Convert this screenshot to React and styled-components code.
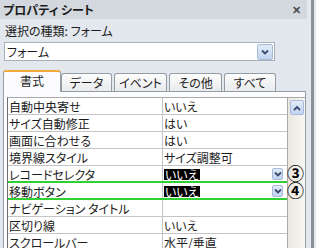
import React from 'react';
import styled, { createGlobalStyle } from 'styled-components';

const Global = createGlobalStyle`
  body {
    margin: 0;
    font-family: "Noto Sans CJK JP", "Noto Sans", sans-serif;
    font-size: 12px;
    font-feature-settings: "palt";
    color: #1c1c1c;
  }
`;

const Window = styled.div`
  width: 316px;
  height: 248px;
  display: flex;
  overflow: hidden;
  background: #e3e7ee;
`;

const Sheet = styled.div`
  width: 311px;
  display: flex;
  flex-direction: column;
`;

const Edge = styled.div`
  width: 3px;
  background: #8c9199;
`;

const TitleBar = styled.div`
  height: 19px;
  margin-right: 4px;
  padding: 0 6px 0 3px;
  display: flex;
  align-items: center;
  justify-content: space-between;
  background: #d3d8df;
  font-weight: bold;
  line-height: 19px;
`;

const Close = styled.span`
  font-size: 11px;
  color: #4a4d52;
`;

const Label = styled.div`
  height: 23px;
  line-height: 23px;
  padding-left: 5px;
`;

const Combo = styled.div`
  box-sizing: border-box;
  width: 271px;
  height: 21px;
  margin-left: 4px;
  padding: 0 1px 0 2px;
  display: flex;
  align-items: center;
  justify-content: space-between;
  background: #fff;
  border: 1px solid #a9b0ba;
`;

const DropButton = styled.div`
  box-sizing: border-box;
  width: ${p => p.$w}px;
  height: ${p => p.$h}px;
  display: flex;
  align-items: center;
  justify-content: center;
  border: 1px solid #a6badc;
  border-radius: 2px;
  background: linear-gradient(#e2ebf8, #c3d4ef);
`;

const Chevron = ({ up }) => (
  <svg width="8" height="6" viewBox="0 0 8 6">
    <path d={up ? 'M1 5 L4 2 L7 5' : 'M1 1.5 L4 4.5 L7 1.5'} fill="none" stroke="#3a4a70" strokeWidth="1.8" />
  </svg>
);

const TabStrip = styled.div`
  height: 21px;
  margin: 9px 0 0 3px;
  display: flex;
  align-items: flex-end;
`;

const Tab = styled.div`
  box-sizing: border-box;
  width: ${p => p.$w}px;
  height: ${p => (p.$active ? 22 : 18)}px;
  margin-right: ${p => p.$gap}px;
  margin-bottom: ${p => (p.$active ? -1 : 0)}px;
  position: relative;
  z-index: ${p => (p.$active ? 1 : 0)};
  display: flex;
  align-items: center;
  justify-content: center;
  padding-bottom: ${p => (p.$active ? 3 : 0)}px;
  border: 1px solid #949ca6;
  border-bottom: none;
  border-top: ${p => (p.$active ? '2px solid #f2a83c' : '1px solid #949ca6')};
  border-radius: 3px 3px 0 0;
  background: ${p => (p.$active ? '#fcfcfe' : 'linear-gradient(#fdfdfd, #e9eaec)')};
`;

const Panel = styled.div`
  flex: 1;
  width: 303px;
  margin-left: 3px;
  box-sizing: border-box;
  padding: 5px 0 0 3px;
  display: flex;
  border: 1px solid #949ca6;
  background: #fcfcfe;
`;

const Grid = styled.div`
  width: 280px;
  border-left: 1px solid #6b6f75;
  border-top: 1px solid #a9a9a9;
  border-right: 1px solid #a9a9a9;
  background: #fff;
`;

const Row = styled.div`
  box-sizing: border-box;
  height: 17px;
  position: relative;
  display: flex;
  border-bottom: ${p => (p.$marked ? '2px solid #2fd02f' : '1px solid #c4c4c4')};
`;

const Name = styled.div`
  width: 153px;
  padding: 1px 0 0 1px;
  border-right: 1px solid #c4c4c4;
  line-height: 15px;
  white-space: nowrap;
`;

const Value = styled.div`
  flex: 1;
  padding: 1px 4px 0 1px;
  display: flex;
  align-items: center;
  justify-content: space-between;
  line-height: 15px;
`;

const Selected = styled.span`
  background: #000;
  color: #fff;
  line-height: 11px;
  height: 11px;
  padding: 0 1px;
`;

const Callout = styled.span`
  position: absolute;
  right: -17px;
  top: -1px;
  height: 16px;
  font-size: 17px;
  line-height: 16px;
  font-weight: bold;
  color: #000;
`;

const Scrollbar = styled.div`
  width: 17px;
  padding-top: 2px;
  display: flex;
  justify-content: center;
  align-items: flex-start;
  border-top: 1px solid #a9a9a9;
  background: linear-gradient(to right, #e9e7df, #f8f7f3);
`;

const rows = [
  { name: '自動中央寄せ', value: 'いいえ' },
  { name: 'サイズ自動修正', value: 'はい' },
  { name: '画面に合わせる', value: 'はい' },
  { name: '境界線スタイル', value: 'サイズ調整可' },
  { name: 'レコードセレクタ', value: 'いいえ', picked: true, mark: '③' },
  { name: '移動ボタン', value: 'いいえ', picked: true, mark: '④' },
  { name: 'ナビゲーション タイトル', value: '' },
  { name: '区切り線', value: 'いいえ' },
  { name: 'スクロールバー', value: '水平/垂直' },
];

const tabs = [
  { label: '書式', w: 58, gap: 0, active: true },
  { label: 'データ', w: 51, gap: 2 },
  { label: 'イベント', w: 53, gap: 2 },
  { label: 'その他', w: 53, gap: 2 },
  { label: 'すべて', w: 52, gap: 0 },
];

export default function App() {
  return (
    <>
      <Global />
      <Window>
        <Sheet>
          <TitleBar>
            <span>プロパティ シート</span>
            <Close>✕</Close>
          </TitleBar>
          <Label>選択の種類: フォーム</Label>
          <Combo>
            <span>フォーム</span>
            <DropButton $w={16} $h={16}><Chevron /></DropButton>
          </Combo>
          <TabStrip>
            {tabs.map(t => (
              <Tab key={t.label} $w={t.w} $gap={t.gap} $active={t.active}>{t.label}</Tab>
            ))}
          </TabStrip>
          <Panel>
            <Grid>
              {rows.map(r => (
                <Row key={r.name} $marked={r.picked}>
                  <Name>{r.name}</Name>
                  <Value>
                    {r.picked ? <Selected>{r.value}</Selected> : <span>{r.value}</span>}
                    {r.picked && <DropButton $w={11} $h={12}><Chevron /></DropButton>}
                  </Value>
                  {r.mark && <Callout>{r.mark}</Callout>}
                </Row>
              ))}
            </Grid>
            <Scrollbar>
              <DropButton $w={14} $h={15}><Chevron up /></DropButton>
            </Scrollbar>
          </Panel>
        </Sheet>
        <Edge />
      </Window>
    </>
  );
}
